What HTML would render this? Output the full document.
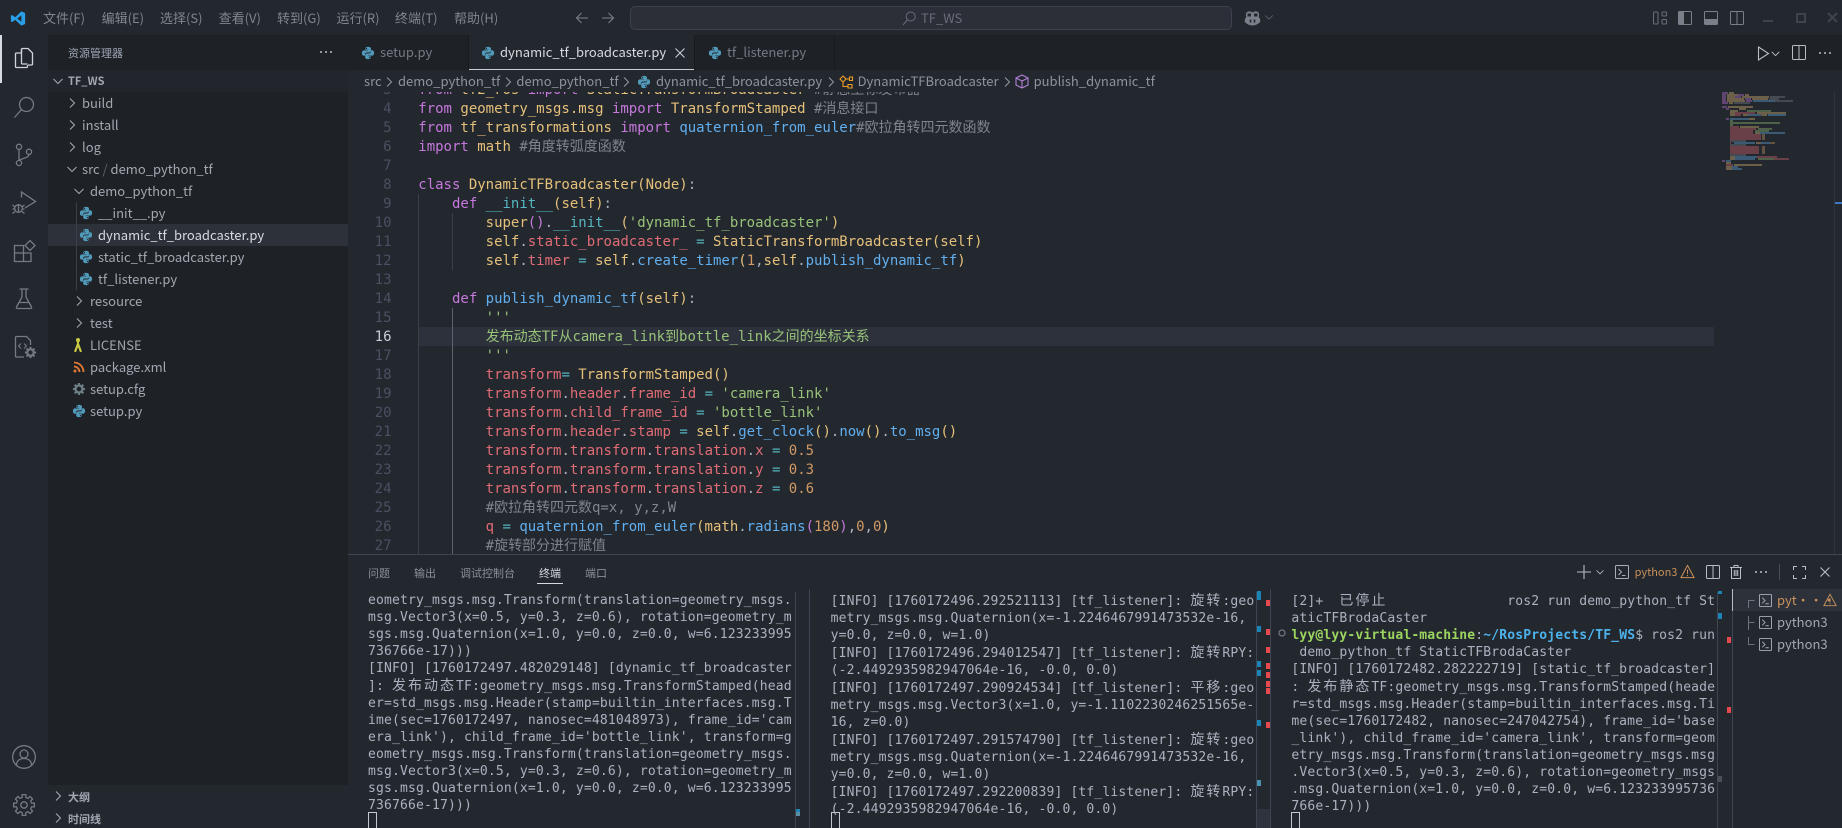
<!DOCTYPE html>
<html><head><meta charset="utf-8"><title>TF_WS</title>
<style>
html,body{margin:0;padding:0;width:1842px;height:828px;overflow:hidden;background:#23272e}
body{position:relative;font-family:"Noto Sans CJK SC","Liberation Sans",sans-serif;font-size:13px;color:#9da5b4}
div,svg,span.a{position:absolute}
.t{white-space:pre;line-height:22px}
svg{overflow:visible;fill:none}
.m{top:7px;color:#80858f;font-size:13px}
.r{left:48px;width:300px;height:22px}
.r .t{top:0;color:#a2a7b1;font-size:13px}
.r svg{top:3px}
.ch{stroke:#a0a5af;stroke-width:1.1}
.bc{top:70px;color:#8e939d;font-size:13px}
.bs{top:74px;stroke:#8e939d;stroke-width:1.1}
.tab{top:41px;font-size:13px}
#code,#nums{font-family:"DejaVu Sans Mono","Noto Sans CJK SC",monospace;font-size:14px;line-height:19px;letter-spacing:-.01px;white-space:pre}
#code{left:70.3px;top:-11px;color:#abb2bf}
#nums{left:0;width:43.5px;top:-11px;text-align:right;color:#495162}
#ed{left:348px;top:92px;width:1494px;height:462px;overflow:hidden}
#ed div{position:static}
#ed #code,#ed #nums,#ed .g,#ed .hl{position:absolute}
.k{color:#c678dd}.y{color:#e5c07b}.b{color:#61afef}.c{color:#7f848e}.s{color:#98c379}.v{color:#e06c75}.o{color:#56b6c2}.n{color:#d19a66}
.term{font-family:"DejaVu Sans Mono","Noto Sans CJK SC",monospace;font-size:13.05px;letter-spacing:.14px;line-height:17px;white-space:pre;color:#abb2bf;top:592px}
.term i{font-family:"Noto Sans CJK SC",sans-serif;font-style:normal;font-size:14px;letter-spacing:2px}
.cur{width:7px;height:15px;border:1px solid #c5c8ce;top:812px}
.pt{top:562px;font-size:11px;color:#8a8f99}
.sb{width:4px}
.bl{background:#1a85b4}.rd{background:#e5484d}
</style></head>
<body>
<svg width="0" height="0" style="position:absolute"><defs>
<symbol id="py" viewBox="0 0 16 16"><path fill="#519aba" d="M7.9 1C5.6 1 5 2 5 3v1.4h3.1v.6H3.4C2.1 5 1 6 1 8c0 2.1 1 3.2 2.2 3.2h1.3V9.6c0-1.2 1-2.2 2.2-2.2h2.9c1 0 1.8-.8 1.8-1.8V3c0-1.1-1-2-3.5-2zM6.3 2.1a.7.7 0 1 1 0 1.4.7.7 0 0 1 0-1.4z"/><path fill="#519aba" d="M8.1 15c2.3 0 2.9-1 2.9-2v-1.4H7.9V11h4.7c1.3 0 2.4-1 2.4-3 0-2.1-1-3.2-2.2-3.2h-1.3v1.6c0 1.2-1 2.2-2.2 2.2H6.6c-1 0-1.8.8-1.8 1.8V13c0 1.1 1 2 3.3 2zm1.6-1.1a.7.7 0 1 1 0-1.4.7.7 0 0 1 0 1.4z"/></symbol>
<symbol id="chr" viewBox="0 0 16 16"><path class="ch" d="M6 3.5l4.5 4.5L6 12.5"/></symbol>
<symbol id="chd" viewBox="0 0 16 16"><path class="ch" d="M3.5 6L8 10.5 12.5 6"/></symbol>
<symbol id="ti" viewBox="0 0 14 14"><rect x=".5" y=".5" width="13" height="13" rx="1" stroke="#a8adb6" fill="none"/><path d="M3.5 4l3 3-3 3M7 10.5h3.5" stroke="#a8adb6" fill="none"/></symbol>
<symbol id="wn" viewBox="0 0 16 16"><path d="M8 1.5L15 14.5H1zM8 6v4.5M8 11.7v1.2" stroke="#c9915c" stroke-width="1.1" fill="none"/></symbol>
<symbol id="gr" viewBox="0 0 24 24"><polygon points="10.11,4.43 10.18,1.66 13.82,1.66 13.89,4.43 16.02,5.31 18.02,3.4 20.6,5.98 18.69,7.98 19.57,10.11 22.34,10.18 22.34,13.82 19.57,13.89 18.69,16.02 20.6,18.02 18.02,20.6 16.02,18.69 13.89,19.57 13.82,22.34 10.18,22.34 10.11,19.57 7.98,18.69 5.98,20.6 3.4,18.02 5.31,16.02 4.43,13.89 1.66,13.82 1.66,10.18 4.43,10.11 5.31,7.98 3.4,5.98 5.98,3.4 7.98,5.31"/></symbol>
</defs></svg>

<!-- regions -->
<div style="left:48px;top:35px;width:300px;height:750px;background:#1e2227"></div>
<div style="left:48px;top:70px;width:300px;height:22px;background:#22262c"></div>
<div style="left:348px;top:35px;width:1494px;height:35px;background:#1e2227"></div>
<div style="left:0;top:35px;width:2px;height:48px;background:#d7dae0"></div>

<!-- title bar -->
<svg style="left:10px;top:11px" width="16" height="15" viewBox="0 0 16 16"><path fill="#2a9fe8" fill-rule="evenodd" d="M11.6.4L5 6.6 1.9 4.2.4 5v6l1.5.8L5 9.4l6.6 6.2 4-1.7V2.1zM11.6 4.6v6.8L7.2 8z"/></svg>
<div class="t m" style="left:43px">文件(F)</div>
<div class="t m" style="left:101.6px">编辑(E)</div>
<div class="t m" style="left:160px">选择(S)</div>
<div class="t m" style="left:218.6px">查看(V)</div>
<div class="t m" style="left:277px">转到(G)</div>
<div class="t m" style="left:336.5px">运行(R)</div>
<div class="t m" style="left:395px">终端(T)</div>
<div class="t m" style="left:454px">帮助(H)</div>
<svg style="left:575px;top:11px" width="14" height="14" viewBox="0 0 14 14"><path d="M13 7H1.5M6.5 2L1.5 7l5 5" stroke="#7d828c"/></svg>
<svg style="left:601px;top:11px" width="14" height="14" viewBox="0 0 14 14"><path d="M1 7h11.5M7.5 2l5 5-5 5" stroke="#7d828c"/></svg>
<div style="left:630px;top:6px;width:600px;height:22px;background:#2c2f38;border:1px solid #3c414c;border-radius:5px"></div>
<svg style="left:902px;top:11px" width="14" height="15" viewBox="0 0 14 15"><circle cx="8.7" cy="5.5" r="4.5" stroke="#686d77"/><path d="M5.5 8.7L1 14" stroke="#686d77"/></svg>
<div class="t" style="left:921px;top:7px;color:#686d77;font-size:13px">TF_WS</div>
<svg style="left:1244px;top:10px" width="17" height="16" viewBox="0 0 17 16"><path d="M.8 9l1.500-2c-.6-1.500-.6-3.500.5-4.700C4 1 6.800 1 8.500 2.600 10.200 1 13 1 14.200 2.300c1.100 1.200 1.100 3.200.5 4.700l1.500 2v3c-2.300 2.300-5 3.500-7.700 3.500S3.100 14.300.8 12z" fill="#7a7f89"/><path d="M6.500 9.500v3M10.500 9.500v3" stroke="#23272e" stroke-width="1.600"/><path d="M3.500 3.500h3.500v3H3.500zM10 3.500h3.500v3H10z" fill="#23272e"/></svg>
<svg style="left:1263px;top:11px" width="12" height="12" viewBox="0 0 16 16"><path d="M3 6l5 5 5-5" stroke="#686d77"/></svg>
<svg style="left:1652px;top:11px" width="16" height="14" viewBox="0 0 16 14"><rect x="1.500" y="1" width="4.500" height="12" rx="1" stroke="#6b7079"/><rect x="10" y="1" width="4.500" height="4" rx="1" stroke="#6b7079"/><rect x="10" y="8.500" width="4.500" height="4.500" rx="1" stroke="#6b7079"/></svg>
<svg style="left:1678px;top:11px" width="14" height="14" viewBox="0 0 14 14"><rect x=".5" y=".5" width="13" height="13" rx="1" stroke="#7a7f89"/><rect x="1" y="1" width="5" height="12" fill="#7a7f89"/></svg>
<svg style="left:1704px;top:11px" width="14" height="14" viewBox="0 0 14 14"><rect x=".5" y=".5" width="13" height="13" rx="1" stroke="#7a7f89"/><rect x="1" y="8" width="12" height="5" fill="#7a7f89"/></svg>
<svg style="left:1730px;top:11px" width="14" height="14" viewBox="0 0 14 14"><rect x=".5" y=".5" width="13" height="13" rx="1" stroke="#7a7f89"/><path d="M7 1v12" stroke="#7a7f89"/></svg>
<div style="left:1763px;top:20px;width:10px;height:2px;background:#3e434c"></div>
<div style="left:1796px;top:13px;width:6px;height:6px;border:2px solid #3e434c"></div>
<svg style="left:1827px;top:12px" width="11" height="11" viewBox="0 0 11 11"><path d="M1 1l9 9M10 1l-9 9" stroke="#3e434c" stroke-width="2"/></svg>

<!-- activity bar -->
<svg style="left:12px;top:46px" width="24" height="24" viewBox="0 0 24 24" stroke="#d0d3d9" stroke-width="1.300"><path d="M9.500 7V3.500a1 1 0 0 1 1-1h5.500l4.500 4.500v11a1 1 0 0 1-1 1H16"/><path d="M15.500 19v1.500a1 1 0 0 1-1 1H4.500a1 1 0 0 1-1-1V8a1 1 0 0 1 1-1h5"/><path d="M9.500 3v14a1 1 0 0 0 1 1h5"/></svg>
<svg style="left:12px;top:95px" width="24" height="24" viewBox="0 0 24 24" stroke="#757a84" stroke-width="1.300"><circle cx="14.500" cy="9.500" r="7"/><path d="M9.500 14.500L2.500 22.500"/></svg>
<svg style="left:12px;top:143px" width="24" height="24" viewBox="0 0 24 24" stroke="#757a84" stroke-width="1.300"><circle cx="7" cy="3.800" r="2.600"/><circle cx="7" cy="20" r="2.600"/><circle cx="17" cy="8.800" r="2.600"/><path d="M7 6.400v11M17 11.400c0 3.500-6 3.500-10 6"/></svg>
<svg style="left:12px;top:191px" width="24" height="24" viewBox="0 0 24 24" stroke="#757a84" stroke-width="1.300"><path d="M9.500 6.500V1l14 9.500-10.500 6.500"/><circle cx="6.500" cy="17.500" r="3.800"/><path d="M.5 14l2.500 2M.5 18h2M.5 22.500l2.500-2M12.500 14L10 16M12.500 18h-2M12.500 22.500L10 20.500M6.500 14v7.500"/></svg>
<svg style="left:12px;top:239px" width="24" height="24" viewBox="0 0 24 24" stroke="#757a84" stroke-width="1.300"><path d="M2.500 6.500h9v7.500h7.500v8.500h-16.500zM2.500 14h9M11.500 14v8.500"/><path d="M18 1.500l5 5-5 5-5-5z"/></svg>
<svg style="left:12px;top:287px" width="24" height="24" viewBox="0 0 24 24" stroke="#757a84" stroke-width="1.300"><path d="M7.500 2h9M10 2v8l-5.500 10a1 1 0 0 0 1 1.500h13a1 1 0 0 0 1-1.500L14 10V2M7 15.500h10"/></svg>
<svg style="left:12px;top:335px" width="24" height="24" viewBox="0 0 24 24" stroke="#757a84" stroke-width="1.300"><path d="M12 22H4.500a1 1 0 0 1-1-1V2.500a1 1 0 0 1 1-1h10l4 4V10"/><path d="M9 8.500L6.500 11 9 13.500M12 8.500l2.500 2.500-2.500 2.500" stroke-width="1.100"/><svg x="12" y="11" width="13" height="13" viewBox="0 0 24 24"><use href="#gr" fill="#757a84" stroke="none"/><circle cx="12" cy="12" r="4" fill="#23272e" stroke="none"/></svg></svg>
<svg style="left:12px;top:745px" width="24" height="24" viewBox="0 0 24 24" stroke="#757a84" stroke-width="1.300"><circle cx="12" cy="12" r="11.300"/><circle cx="12" cy="9" r="4"/><path d="M4.500 20c0-4 3-6.500 7.500-6.500s7.500 2.500 7.500 6.500"/></svg>
<svg style="left:12px;top:793px" width="24" height="24" viewBox="0 0 24 24"><use href="#gr" stroke="#757a84" stroke-width="1.300"/><circle cx="12" cy="12" r="3.200" stroke="#757a84" stroke-width="1.300"/></svg>

<!-- sidebar -->
<div class="t" style="left:68px;top:41.500px;font-size:11px;color:#9da5b4">资源管理器</div>
<svg style="left:319px;top:50px" width="14" height="4"><circle cx="2" cy="2" r="1" fill="#b9bdc5"/><circle cx="7" cy="2" r="1" fill="#b9bdc5"/><circle cx="12" cy="2" r="1" fill="#b9bdc5"/></svg>
<svg style="left:50px;top:73px" width="16" height="16"><use href="#chd"/></svg>
<div class="t" style="left:68px;top:70px;font-size:11px;font-weight:700;color:#a2a7b1">TF_WS</div>

<div style="left:48px;top:224px;width:300px;height:22px;background:#2c313a"></div>
<div style="left:76px;top:202px;width:1px;height:88px;background:#3b4048"></div>

<div class="r" style="top:92px"><svg style="left:16px" width="16" height="16"><use href="#chr"/></svg><div class="t" style="left:34px">build</div></div>
<div class="r" style="top:114px"><svg style="left:16px" width="16" height="16"><use href="#chr"/></svg><div class="t" style="left:34px">install</div></div>
<div class="r" style="top:136px"><svg style="left:16px" width="16" height="16"><use href="#chr"/></svg><div class="t" style="left:34px">log</div></div>
<div class="r" style="top:158px"><svg style="left:16px" width="16" height="16"><use href="#chd"/></svg><div class="t" style="left:34px">src<span style="color:#5c6370"> / </span>demo_python_tf</div></div>
<div class="r" style="top:180px"><svg style="left:23px" width="16" height="16"><use href="#chd"/></svg><div class="t" style="left:42px">demo_python_tf</div></div>
<div class="r" style="top:202px"><svg style="left:31px;top:4px" width="14" height="14"><use href="#py"/></svg><div class="t" style="left:50px">__init__.py</div></div>
<div class="r" style="top:224px"><svg style="left:31px;top:4px" width="14" height="14"><use href="#py"/></svg><div class="t" style="left:50px;color:#d7dae0">dynamic_tf_broadcaster.py</div></div>
<div class="r" style="top:246px"><svg style="left:31px;top:4px" width="14" height="14"><use href="#py"/></svg><div class="t" style="left:50px">static_tf_broadcaster.py</div></div>
<div class="r" style="top:268px"><svg style="left:31px;top:4px" width="14" height="14"><use href="#py"/></svg><div class="t" style="left:50px">tf_listener.py</div></div>
<div class="r" style="top:290px"><svg style="left:23px" width="16" height="16"><use href="#chr"/></svg><div class="t" style="left:42px">resource</div></div>
<div class="r" style="top:312px"><svg style="left:23px" width="16" height="16"><use href="#chr"/></svg><div class="t" style="left:42px">test</div></div>
<div class="r" style="top:334px"><svg style="left:24px;top:3px" width="12" height="16" viewBox="0 0 12 16"><path d="M6 1a2 2 0 0 1 2 2c0 1.500-1 2-1.200 3L10 14.500l-2 .8L6 10l-2 5.300-2-.8L5.200 6C5 5 4 4.500 4 3a2 2 0 0 1 2-2z" fill="#cbcb41"/></svg><div class="t" style="left:42px">LICENSE</div></div>
<div class="r" style="top:356px"><svg style="left:25px;top:5px" width="12" height="12" viewBox="0 0 12 12"><circle cx="2" cy="10" r="1.500" fill="#e37933"/><path d="M1 5.500a5.500 5.500 0 0 1 5.500 5.500M1 1.500A9.500 9.500 0 0 1 10.500 11" stroke="#e37933" stroke-width="1.800"/></svg><div class="t" style="left:42px">package.xml</div></div>
<div class="r" style="top:378px"><svg style="left:24px;top:4px" width="14" height="14" viewBox="0 0 24 24"><use href="#gr" fill="#6d8086"/><circle cx="12" cy="12" r="4" fill="#1e2227"/></svg><div class="t" style="left:42px">setup.cfg</div></div>
<div class="r" style="top:400px"><svg style="left:24px;top:4px" width="14" height="14"><use href="#py"/></svg><div class="t" style="left:42px">setup.py</div></div>

<svg style="left:50px;top:788px" width="16" height="16"><use href="#chr"/></svg>
<div class="t" style="left:68px;top:786px;font-size:11px;font-weight:700;color:#a2a7b1">大纲</div>
<svg style="left:50px;top:810px" width="16" height="16"><use href="#chr"/></svg>
<div class="t" style="left:68px;top:808px;font-size:11px;font-weight:700;color:#a2a7b1">时间线</div>

<!-- tabs -->
<div style="left:468px;top:35px;width:226px;height:35px;background:#23272e;box-sizing:border-box;border-bottom:1px solid #c8ccd4"></div>
<div style="left:467.500px;top:35px;width:1px;height:35px;background:#181a1f"></div>
<div style="left:694px;top:35px;width:1px;height:35px;background:#181a1f"></div>
<div style="left:834px;top:35px;width:1px;height:35px;background:#181a1f"></div>
<svg style="left:361px;top:46px" width="14" height="14"><use href="#py"/></svg>
<div class="t tab" style="left:380px;color:#747a85">setup.py</div>
<svg style="left:481px;top:46px" width="14" height="14"><use href="#py"/></svg>
<div class="t tab" style="left:500px;color:#d7dae0">dynamic_tf_broadcaster.py</div>
<svg style="left:675px;top:48px" width="10" height="10" viewBox="0 0 10 10"><path d="M.5.5l9 9M9.500.5l-9 9" stroke="#c8ccd4" stroke-width="1.100"/></svg>
<svg style="left:708px;top:46px" width="14" height="14"><use href="#py"/></svg>
<div class="t tab" style="left:727px;color:#747a85">tf_listener.py</div>
<svg style="left:1755px;top:45px" width="16" height="16" viewBox="0 0 16 16"><path d="M3.500 2l10 6.500-10 6.500z" stroke="#b9bdc5" stroke-width="1.100"/></svg>
<svg style="left:1770px;top:48px" width="11" height="11" viewBox="0 0 16 16"><path d="M2.500 5.500L8 11l5.500-5.500" stroke="#b9bdc5" stroke-width="1.300"/></svg>
<svg style="left:1792px;top:45px" width="14" height="15" viewBox="0 0 14 15"><rect x=".5" y=".5" width="13" height="14" rx="1" stroke="#b9bdc5"/><path d="M7 1v13" stroke="#b9bdc5"/></svg>
<svg style="left:1818px;top:51px" width="14" height="4"><circle cx="2" cy="2" r="1" fill="#b9bdc5"/><circle cx="7" cy="2" r="1" fill="#b9bdc5"/><circle cx="12" cy="2" r="1" fill="#b9bdc5"/></svg>

<!-- editor -->
<div id="ed">
<div class="hl" style="left:70px;top:235px;width:1296px;height:19px;background:#2c313c"></div>
<div class="g" style="left:70px;top:102px;width:1px;height:360px;background:#3b4048"></div>
<div class="g" style="left:104px;top:121px;width:1px;height:57px;background:#3b4048"></div>
<div class="g" style="left:104px;top:216px;width:1px;height:246px;background:#5c6370"></div>
<div id="nums">3
4
5
6
7
8
9
10
11
12
13
14
15
<span style="color:#c8ccd4">16</span>
17
18
19
20
21
22
23
24
25
26
27</div>
<div id="code"><span class="k">from</span> <span class="y">tf2_ros</span> <span class="k">import</span> <span class="y">StaticTransformBroadcaster</span> <span class="c">#静态坐标发布器</span>
<span class="k">from</span> <span class="y">geometry_msgs.msg</span> <span class="k">import</span> <span class="y">TransformStamped</span> <span class="c">#消息接口</span>
<span class="k">from</span> <span class="y">tf_transformations</span> <span class="k">import</span> <span class="b">quaternion_from_euler</span><span class="c">#欧拉角转四元数函数</span>
<span class="k">import</span> <span class="y">math</span> <span class="c">#角度转弧度函数</span>

<span class="k">class</span> <span class="y">DynamicTFBroadcaster(Node)</span>:
    <span class="k">def</span> <span class="o">__init__</span><span class="y">(self)</span>:
        <span class="y">super</span><span class="k">()</span>.<span class="o">__init__</span><span class="y">(</span><span class="s">'dynamic_tf_broadcaster'</span><span class="y">)</span>
        <span class="y">self</span>.<span class="v">static_broadcaster_</span> <span class="o">=</span> <span class="y">StaticTransformBroadcaster(self)</span>
        <span class="y">self</span>.<span class="v">timer</span> <span class="o">=</span> <span class="y">self</span>.<span class="b">create_timer</span><span class="y">(</span><span class="n">1</span>,<span class="y">self</span>.<span class="b">publish_dynamic_tf</span><span class="y">)</span>

    <span class="k">def</span> <span class="b">publish_dynamic_tf</span><span class="y">(self)</span>:
        <span class="s">'''</span>
        <span class="s">发布动态TF从camera_link到bottle_link之间的坐标关系</span>
        <span class="s">'''</span>
        <span class="v">transform</span><span class="o">=</span> <span class="y">TransformStamped()</span>
        <span class="v">transform</span>.<span class="v">header</span>.<span class="v">frame_id</span> <span class="o">=</span> <span class="s">'camera_link'</span>
        <span class="v">transform</span>.<span class="v">child_frame_id</span> <span class="o">=</span> <span class="s">'bottle_link'</span>
        <span class="v">transform</span>.<span class="v">header</span>.<span class="v">stamp</span> <span class="o">=</span> <span class="y">self</span>.<span class="b">get_clock</span><span class="y">()</span>.<span class="b">now</span><span class="y">()</span>.<span class="b">to_msg</span><span class="y">()</span>
        <span class="v">transform</span>.<span class="v">transform</span>.<span class="v">translation</span>.<span class="v">x</span> <span class="o">=</span> <span class="n">0.5</span>
        <span class="v">transform</span>.<span class="v">transform</span>.<span class="v">translation</span>.<span class="v">y</span> <span class="o">=</span> <span class="n">0.3</span>
        <span class="v">transform</span>.<span class="v">transform</span>.<span class="v">translation</span>.<span class="v">z</span> <span class="o">=</span> <span class="n">0.6</span>
        <span class="c">#欧拉角转四元数q=x, y,z,W</span>
        <span class="v">q</span> <span class="o">=</span> <span class="b">quaternion_from_euler</span><span class="y">(math</span>.<span class="b">radians</span><span class="k">(</span><span class="n">180</span><span class="k">)</span>,<span class="n">0</span>,<span class="n">0</span><span class="y">)</span>
        <span class="c">#旋转部分进行赋值</span></div>
</div>

<!-- breadcrumb -->
<div style="left:348px;top:70px;width:1494px;height:22px;background:#23272e"></div>
<div class="t bc" style="left:364px">src</div>
<svg class="bs" style="left:382px" width="16" height="16"><path d="M5 3.500l4.500 4.500L5 12.500"/></svg>
<div class="t bc" style="left:398px">demo_python_tf</div>
<svg class="bs" style="left:501px" width="16" height="16"><path d="M5 3.500l4.500 4.500L5 12.500"/></svg>
<div class="t bc" style="left:516.400px">demo_python_tf</div>
<svg class="bs" style="left:619px" width="16" height="16"><path d="M5 3.500l4.500 4.500L5 12.500"/></svg>
<svg style="left:637px;top:75px" width="14" height="14"><use href="#py"/></svg>
<div class="t bc" style="left:656px">dynamic_tf_broadcaster.py</div>
<svg class="bs" style="left:824px" width="16" height="16"><path d="M5 3.500l4.500 4.500L5 12.500"/></svg>
<svg style="left:839px;top:74px" width="15" height="15" viewBox="0 0 15 15" stroke="#ee9d28" stroke-width="1.100"><path d="M1 5l3-3 3 3-3 3zM4 8v4.500h5M9 10.500h4v3.500H9zM7 5h3.500M10.500 3h3v3.500h-3z"/></svg>
<div class="t bc" style="left:857.600px">DynamicTFBroadcaster</div>
<svg class="bs" style="left:1000px" width="16" height="16"><path d="M5 3.500l4.500 4.500L5 12.500"/></svg>
<svg style="left:1015px;top:74px" width="14" height="15" viewBox="0 0 14 15" stroke="#b180d7" stroke-width="1.100"><path d="M7 1l6 3v7l-6 3-6-3V4zM1 4l6 3 6-3M7 7v7"/></svg>
<div class="t bc" style="left:1033.600px">publish_dynamic_tf</div>

<!-- minimap -->
<svg style="left:1722px;top:92px" width="80" height="80" viewBox="0 0 80 80" stroke-width="1.400" opacity=".5">
<path stroke="#c678dd" d="M0 1h6M0 3h4M16 3h6M0 5h4M13 5h6M0 7h4M23 7h6M0 9h4M24 9h6M0 11h6M0 15h5M4 17h3M4 27h3M0 69h3"/>
<path stroke="#e5c07b" d="M7 1h5M5 3h11M23 3h4M5 5h8M20 5h27M5 7h17M30 7h16M5 9h18M7 11h4M6 15h25M17 17h7M8 19h8M8 21h5M35 21h29M8 23h5M21 23h5M41 23h4M27 27h6M18 35h19M33 41h5M34 51h5M8 65h5M8 67h5M4 71h5M12 73h28M4 75h6M4 77h6"/>
<path stroke="#61afef" d="M31 9h22M26 23h13M46 23h18M8 27h19M38 41h25M12 51h21M39 51h9M13 65h22M13 67h20M4 69h5M10 75h6M10 77h10"/>
<path stroke="#e06c75" d="M13 21h20M13 23h6M8 35h9M8 37h26M8 39h23M8 41h23M8 43h31M8 45h31M8 47h31M8 51h1M8 55h29M8 57h29M8 59h29M8 61h29M35 65h20M52 67h15M4 73h7"/>
<path stroke="#98c379" d="M25 19h24M8 29h3M8 31h50M8 33h3M36 37h14M33 39h14M36 67h16"/>
<path stroke="#7f848e" d="M48 5h15M47 7h10M53 9h18M12 11h16M8 49h16M8 53h16M8 63h16"/>
<path stroke="#d19a66" d="M40 43h3M40 45h3M40 47h3M39 23h2M48 51h5M40 55h3M40 57h3M40 59h3M40 61h3"/>
</svg>
<div style="left:1834px;top:92px;width:1px;height:462px;background:#30343c"></div>
<div style="left:1835px;top:202px;width:7px;height:2px;background:#3f78c9"></div>

<!-- panel -->
<div style="left:348px;top:554px;width:1494px;height:1px;background:#3e4452"></div>
<div class="t pt" style="left:368px">问题</div>
<div class="t pt" style="left:414px">输出</div>
<div class="t pt" style="left:460px">调试控制台</div>
<div class="t pt" style="left:539px;color:#d7dae0">终端</div>
<div class="t pt" style="left:585px">端口</div>
<div style="left:537px;top:583px;width:26px;height:1px;background:#d7dae0"></div>

<svg style="left:1577px;top:565px" width="14" height="14"><path d="M7 0v14M0 7h14" stroke="#b9bdc5" stroke-width="1.100"/></svg>
<svg style="left:1595px;top:567px" width="10" height="10" viewBox="0 0 16 16"><path d="M2.500 5.500L8 11l5.500-5.500" stroke="#b9bdc5" stroke-width="1.300"/></svg>
<svg style="left:1615px;top:565px" width="14" height="14"><use href="#ti"/></svg>
<div class="t" style="left:1634.600px;top:561px;color:#c9915c;font-size:11px">python3</div>
<svg style="left:1680px;top:564px" width="15" height="15"><use href="#wn"/></svg>
<svg style="left:1706px;top:565px" width="14" height="14" viewBox="0 0 14 14"><rect x=".5" y=".5" width="13" height="13" rx="1" stroke="#b9bdc5"/><path d="M7 1v12" stroke="#b9bdc5"/></svg>
<svg style="left:1730px;top:565px" width="12" height="14" viewBox="0 0 12 14"><path d="M0 2.500h12M4 2.500V.5h4v2M1.500 2.500v11h9v-11M4.300 5v6M6 5v6M7.700 5v6" stroke="#b9bdc5"/></svg>
<svg style="left:1754px;top:570px" width="14" height="4"><circle cx="2" cy="2" r="1" fill="#b9bdc5"/><circle cx="7" cy="2" r="1" fill="#b9bdc5"/><circle cx="12" cy="2" r="1" fill="#b9bdc5"/></svg>
<div style="left:1779px;top:564px;width:1px;height:16px;background:#4a4f59"></div>
<svg style="left:1793px;top:566px" width="13" height="13" viewBox="0 0 13 13"><path d="M.5 4V.5H4M9 .5h3.500V4M12.500 9v3.500H9M4 12.500H.5V9" stroke="#b9bdc5"/></svg>
<svg style="left:1820px;top:567px" width="10" height="10" viewBox="0 0 10 10"><path d="M.5.5l9 9M9.500.5l-9 9" stroke="#b9bdc5" stroke-width="1.100"/></svg>

<!-- terminal pane 1 -->
<div class="term" style="left:368px">eometry_msgs.msg.Transform(translation=geometry_msgs.
msg.Vector3(x=0.5, y=0.3, z=0.6), rotation=geometry_m
sgs.msg.Quaternion(x=1.0, y=0.0, z=0.0, w=6.123233995
736766e-17)))
[INFO] [1760172497.482029148] [dynamic_tf_broadcaster
]: <i>发布动态</i>TF:geometry_msgs.msg.TransformStamped(head
er=std_msgs.msg.Header(stamp=builtin_interfaces.msg.T
ime(sec=1760172497, nanosec=481048973), frame_id='cam
era_link'), child_frame_id='bottle_link', transform=g
eometry_msgs.msg.Transform(translation=geometry_msgs.
msg.Vector3(x=0.5, y=0.3, z=0.6), rotation=geometry_m
sgs.msg.Quaternion(x=1.0, y=0.0, z=0.0, w=6.123233995
736766e-17)))</div>
<div class="cur" style="left:368px"></div>
<div style="left:795px;top:592px;width:1px;height:236px;background:#3e4452"></div>
<div style="left:809px;top:589px;width:1px;height:239px;background:#3e4452"></div>
<div style="left:796px;top:809px;width:4px;height:3px;background:#1a85b4"></div>
<div style="left:796px;top:812px;width:4px;height:4px;background:#5a8ea3"></div>

<!-- terminal pane 2 -->
<div class="term" style="left:830.600px">[INFO] [1760172496.292521113] [tf_listener]: <i>旋转</i>:geo
metry_msgs.msg.Quaternion(x=-1.2246467991473532e-16,
y=0.0, z=0.0, w=1.0)
[INFO] [1760172496.294012547] [tf_listener]: <i>旋转</i>RPY:
(-2.4492935982947064e-16, -0.0, 0.0)
[INFO] [1760172497.290924534] [tf_listener]: <i>平移</i>:geo
metry_msgs.msg.Vector3(x=1.0, y=-1.1102230246251565e-
16, z=0.0)
[INFO] [1760172497.291574790] [tf_listener]: <i>旋转</i>:geo
metry_msgs.msg.Quaternion(x=-1.2246467991473532e-16,
y=0.0, z=0.0, w=1.0)
[INFO] [1760172497.292200839] [tf_listener]: <i>旋转</i>RPY:
(-2.4492935982947064e-16, -0.0, 0.0)</div>
<div class="cur" style="left:830.600px"></div>
<div style="left:1256px;top:592px;width:1px;height:236px;background:#3e4452"></div>
<div style="left:1270px;top:589px;width:1px;height:239px;background:#3e4452"></div>
<div style="left:1257px;top:809px;width:13px;height:19px;background:#2f333d"></div>
<div class="sb bl" style="left:1257px;top:591px;height:9px"></div>
<div class="sb bl" style="left:1257px;top:626px;height:6px"></div>
<div class="sb bl" style="left:1257px;top:661px;height:6px"></div>
<div class="sb bl" style="left:1257px;top:670px;height:6px"></div>
<div class="sb bl" style="left:1257px;top:720px;height:6px"></div>
<div class="sb" style="left:1257px;top:780px;height:6px;background:#4a90b0"></div>
<div class="sb rd" style="left:1266px;top:600px;height:6px"></div>
<div class="sb rd" style="left:1266px;top:629px;height:6px"></div>
<div class="sb rd" style="left:1266px;top:647px;height:6px"></div>
<div class="sb rd" style="left:1266px;top:663px;height:6px"></div>
<div class="sb rd" style="left:1266px;top:672px;height:6px"></div>
<div class="sb rd" style="left:1266px;top:681px;height:6px"></div>
<div class="sb rd" style="left:1266px;top:688px;height:6px"></div>
<div class="sb rd" style="left:1266px;top:722px;height:6px"></div>

<!-- terminal pane 3 -->
<svg style="left:1278px;top:629px" width="8" height="8"><circle cx="4" cy="4" r="3" stroke="#6e737d" stroke-width="1.300"/></svg>
<div class="term" style="left:1291.400px">[2]+  <i>已停止</i>               ros2 run demo_python_tf St
aticTFBrodaCaster
<b style="color:#9bd45f">lyy@lyy-virtual-machine</b>:<b style="color:#4db2ec">~/RosProjects/TF_WS</b>$ ros2 run
 demo_python_tf StaticTFBrodaCaster
[INFO] [1760172482.282222719] [static_tf_broadcaster]
: <i>发布静态</i>TF:geometry_msgs.msg.TransformStamped(heade
r=std_msgs.msg.Header(stamp=builtin_interfaces.msg.Ti
me(sec=1760172482, nanosec=247042754), frame_id='base
_link'), child_frame_id='camera_link', transform=geom
etry_msgs.msg.Transform(translation=geometry_msgs.msg
.Vector3(x=0.5, y=0.3, z=0.6), rotation=geometry_msgs
.msg.Quaternion(x=1.0, y=0.0, z=0.0, w=6.123233995736
766e-17)))</div>
<div class="cur" style="left:1291.400px"></div>
<div style="left:1717px;top:592px;width:1px;height:236px;background:#3e4452"></div>
<div class="sb bl" style="left:1718px;top:591px;height:3px"></div>
<div class="sb bl" style="left:1718px;top:613px;height:6px"></div>
<div class="sb" style="left:1718px;top:776px;height:6px;background:#4b5059"></div>
<div class="sb rd" style="left:1727px;top:637px;height:6px"></div>
<div class="sb rd" style="left:1727px;top:707px;height:6px"></div>

<!-- terminal list -->
<div style="left:1732px;top:589px;width:110px;height:22px;background:#2c313a"></div>
<div style="left:1732px;top:589px;width:1px;height:239px;background:#3e4452"></div>
<div style="left:1732px;top:589px;width:1px;height:22px;background:#b9bdc5"></div>
<svg style="left:1747px;top:590px" width="10" height="66" stroke="#6e737d"><path d="M7.500 10.500H1.500V18M1.500 26v14M1.500 32.500H7.500M1.500 47v7.500H7.500" stroke-width="1"/></svg>
<svg style="left:1759px;top:594px" width="13" height="13"><use href="#ti"/></svg>
<svg style="left:1759px;top:616px" width="13" height="13"><use href="#ti"/></svg>
<svg style="left:1759px;top:638px" width="13" height="13"><use href="#ti"/></svg>
<div class="t" style="left:1777px;top:589px;color:#c9915c;font-size:13px">pyt···</div>
<svg style="left:1823px;top:593px" width="14" height="14"><use href="#wn"/></svg>
<div class="t" style="left:1777px;top:611px;color:#a2a7b1;font-size:13px">python3</div>
<div class="t" style="left:1777px;top:633px;color:#a2a7b1;font-size:13px">python3</div>
</body></html>
